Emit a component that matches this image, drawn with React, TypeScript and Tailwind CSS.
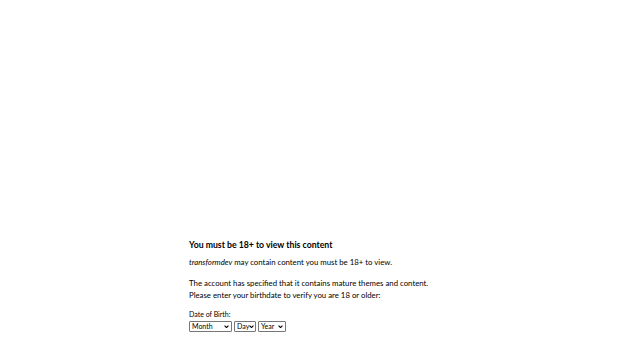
import React from "react";

function Sel({ label, w }: { label: string; w: string }) {
  return (
    <div className={`flex items-center justify-between h-[11px] ${w} border border-[#767676] rounded-[1px] bg-white pl-[2px] pr-[2px]`}>
      <span className="text-[7px] leading-[9px] text-black">{label}</span>
      <svg width="5" height="3.5" viewBox="0 0 6 4" className="shrink-0">
        <path d="M0.7 0.7 L3 3 L5.3 0.7" fill="none" stroke="#000" strokeWidth="1.4" />
      </svg>
    </div>
  );
}

export default function App() {
  return (
    <div className="w-[620px] h-[343px] bg-white overflow-hidden" style={{ fontFamily: "Lato, 'Liberation Sans', sans-serif" }}>
      <div className="pt-[239px] pl-[189px] text-black">
        <div className="text-[8.7px] font-bold leading-[12px]">You must be 18+ to view this content</div>
        <div className="mt-[5px] text-[7.8px] leading-[12px]">
          <i>transformdev</i> may contain content you must be 18+ to view.
        </div>
        <div className="mt-[9px] text-[7.8px] leading-[12px]">
          The account has specified that it contains mature themes and content.
          <br />
          Please enter your birthdate to verify you are 18 or older:
        </div>
        <div className="mt-[8px] text-[7px] leading-[10px]">Date of Birth:</div>
        <div className="mt-[2px] flex gap-[2px]">
          <Sel label="Month" w="w-[43px]" />
          <Sel label="Day" w="w-[22px]" />
          <Sel label="Year" w="w-[28px]" />
        </div>
      </div>
    </div>
  );
}
